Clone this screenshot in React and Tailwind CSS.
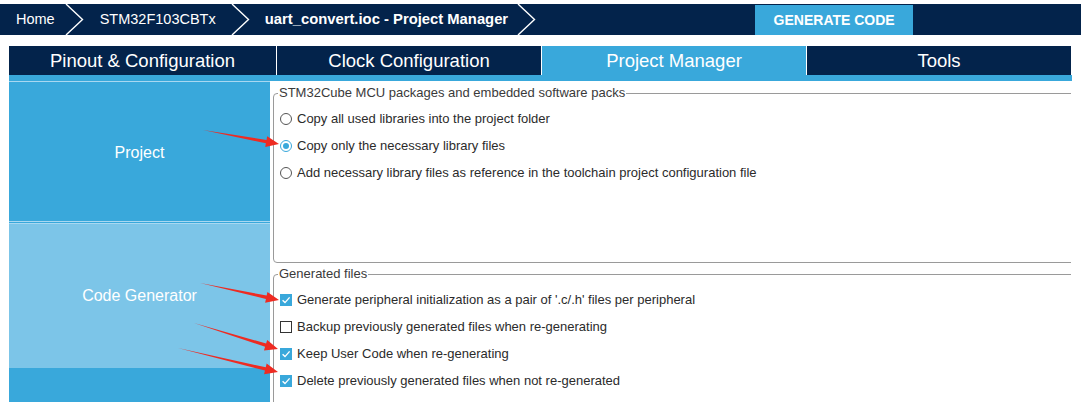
import React from 'react';

const arrows = [
  { x0: 203, y0: 130, x1: 279, y1: 144 },
  { x0: 200, y0: 283, x1: 279, y1: 300 },
  { x0: 194, y0: 323, x1: 278, y1: 349 },
  { x0: 178, y0: 348, x1: 278, y1: 372 },
];

const arrowPoints = ({ x0, y0, x1, y1 }) => {
  const dx = x1 - x0;
  const dy = y1 - y0;
  const len = Math.hypot(dx, dy);
  const ux = dx / len;
  const uy = dy / len;
  const nx = -uy;
  const ny = ux;
  const headLen = 13;
  const headW = 5.5;
  const shaftW = 1.7;
  const bx = x1 - ux * headLen;
  const by = y1 - uy * headLen;
  const pts = [
    [x0, y0],
    [bx + nx * shaftW, by + ny * shaftW],
    [bx + nx * headW, by + ny * headW],
    [x1, y1],
    [bx - nx * headW, by - ny * headW],
    [bx - nx * shaftW, by - ny * shaftW],
  ];
  return pts.map((p) => p.join(',')).join(' ');
};

const Chevron = () => (
  <svg width="19" height="31" viewBox="0 0 19 31" className="shrink-0">
    <polyline points="1,0 17.5,15.5 1,31" fill="none" stroke="white" strokeWidth="1.4" />
  </svg>
);

const Radio = ({ checked }) => (
  <span
    className={
      checked
        ? 'flex h-[12px] w-[12px] shrink-0 items-center justify-center rounded-full border border-[#39a8db] bg-white'
        : 'flex h-[12px] w-[12px] shrink-0 items-center justify-center rounded-full border border-[#555] bg-white'
    }
  >
    {checked && <span className="h-[6px] w-[6px] rounded-full bg-[#39a8db]" />}
  </span>
);

const Checkbox = ({ checked }) =>
  checked ? (
    <span className="flex h-[12px] w-[12px] shrink-0 items-center justify-center bg-[#39a8db]">
      <svg width="10" height="10" viewBox="0 0 10 10">
        <polyline points="1.6,5.2 4,7.6 8.6,2.4" fill="none" stroke="white" strokeWidth="1.4" />
      </svg>
    </span>
  ) : (
    <span className="h-[12px] w-[12px] shrink-0 border border-[#333] bg-white" />
  );

const libraryOptions = [
  { label: 'Copy all used libraries into the project folder', checked: false },
  { label: 'Copy only the necessary library files', checked: true },
  { label: 'Add necessary library files as reference in the toolchain project configuration file', checked: false },
];

const generatedOptions = [
  { label: "Generate peripheral initialization as a pair of '.c/.h' files per peripheral", checked: true },
  { label: 'Backup previously generated files when re-generating', checked: false },
  { label: 'Keep User Code when re-generating', checked: true },
  { label: 'Delete previously generated files when not re-generated', checked: true },
];

const tabs = [
  { label: 'Pinout & Configuration', active: false },
  { label: 'Clock Configuration', active: false },
  { label: 'Project Manager', active: true },
  { label: 'Tools', active: false },
];

export default function App() {
  return (
    <div className="relative h-[402px] w-[1081px] overflow-hidden bg-white font-['Liberation_Sans',Arial,sans-serif]">
      <div className="h-[4px]" />
      <header className="flex h-[31px] bg-[#03234b] text-white">
        <div className="flex items-center text-[14.5px]">
          <span className="pl-[16px]">Home</span>
          <span className="ml-[10px]"><Chevron /></span>
          <span className="ml-[16px]">STM32F103CBTx</span>
          <span className="ml-[15px]"><Chevron /></span>
          <span className="ml-[15px] text-[14.8px] font-bold">uart_convert.ioc - Project Manager</span>
          <span className="ml-[9px]"><Chevron /></span>
        </div>
        <button className="ml-[219px] mt-[1px] h-[30px] w-[158px] bg-[#39a8db] text-[14px] font-bold text-white">
          GENERATE CODE
        </button>
      </header>

      <div className="h-[11px]" />

      <nav className="mx-[9px] flex h-[29px]">
        {tabs.map((t, i) => (
          <div
            key={t.label}
            className={
              (i === 0 ? 'w-[267px] ' : 'w-[265px] border-l border-white ') +
              (t.active ? 'bg-[#39a8db] ' : 'bg-[#03234b] ') +
              'flex items-center justify-center text-[18.5px] text-white'
            }
          >
            {t.label}
          </div>
        ))}
      </nav>
      <div className="mx-[9px] h-[6px] bg-[#39a8db]" />

      <div className="mx-[9px] flex h-[321px]">
        <aside className="flex w-[261px] shrink-0 flex-col bg-[#39a8db] text-[16px] text-white">
          <div className="h-[1px] bg-[#a8d8f1]" />
          <div className="flex h-[139px] items-center justify-center pt-[3px]">Project</div>
          <div className="h-[1px] bg-[#a8d8f1]" />
          <div className="h-[1px] bg-[#39a8db]" />
          <div className="h-[1px] bg-[#a8d8f1]" />
          <div className="flex h-[144px] items-center justify-center bg-[#7cc5e8]">Code Generator</div>
        </aside>

        <main className="w-[801px] overflow-hidden pl-[3px] text-[13px] text-[#2b2b2b]">
          <fieldset className="mt-[5px] h-[177px] w-[812px] rounded-[4px] border border-[#9a9a9a] pl-[4px] pt-[5px]">
            <legend className="px-[1px] leading-[14px] text-[#3a3a3a]">
              STM32Cube MCU packages and embedded software packs
            </legend>
            {libraryOptions.map((o) => (
              <div key={o.label} className="ml-[2px] flex h-[27px] items-center gap-[5px] whitespace-nowrap">
                <Radio checked={o.checked} />
                <span>{o.label}</span>
              </div>
            ))}
          </fieldset>

          <fieldset className="mt-[4px] h-[200px] w-[812px] rounded-[4px] border border-[#9a9a9a] pl-[4px] pt-[5px]">
            <legend className="px-[1px] leading-[14px] text-[#3a3a3a]">Generated files</legend>
            {generatedOptions.map((o) => (
              <div key={o.label} className="ml-[2px] flex h-[27px] items-center gap-[5px] whitespace-nowrap">
                <Checkbox checked={o.checked} />
                <span>{o.label}</span>
              </div>
            ))}
          </fieldset>
        </main>
      </div>

      <svg className="pointer-events-none absolute left-0 top-0" width="1081" height="402">
        {arrows.map((a, i) => (
          <polygon key={i} points={arrowPoints(a)} fill="#ee2b22" />
        ))}
      </svg>
    </div>
  );
}
